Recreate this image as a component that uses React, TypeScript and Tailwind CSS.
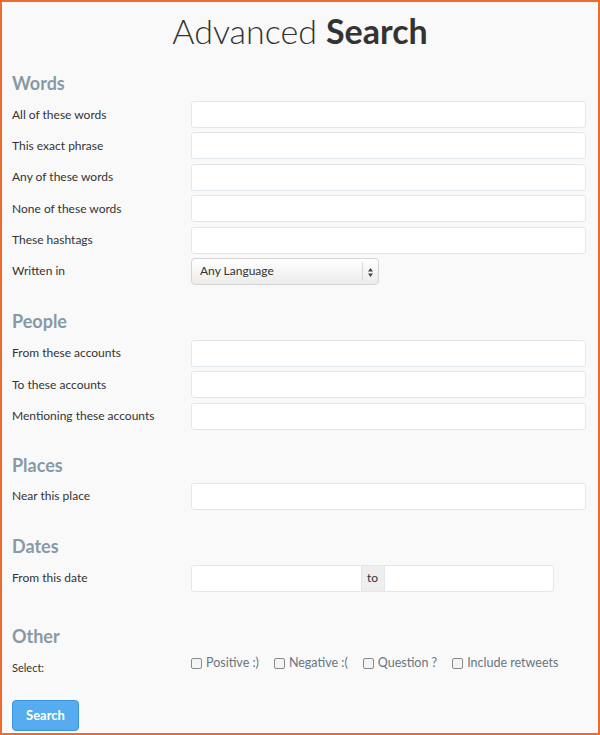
import React from "react";

const font = { fontFamily: "Lato, 'Open Sans', sans-serif" };

function Heading({ children }: { children: React.ReactNode }) {
  return (
    <h2 className="h-[24px] flex items-center text-[18px] font-bold text-[#8899a6] leading-none">
      {children}
    </h2>
  );
}

function Row({ label, children }: { label: string; children?: React.ReactNode }) {
  return (
    <div className="flex items-center h-[27px]">
      <label className="w-[179px] text-[12px] text-[#333]">{label}</label>
      {children ?? (
        <input className="w-[395px] h-[27px] bg-white border border-[#e1e8ed] rounded-[3px] outline-none" />
      )}
    </div>
  );
}

function Check({ label }: { label: string }) {
  return (
    <label className="flex items-center gap-[4px] text-[12.5px] text-[#66757f]">
      <span className="w-[11px] h-[11px] border border-[#8a8a8a] rounded-[2px] bg-[#f4f4f4]" />
      {label}
    </label>
  );
}

export default function App() {
  return (
    <div style={font} className="w-[600px] h-[735px] border-2 border-[#ee6b2d] bg-[#f9f9f9] px-[10px] overflow-hidden">
      <h1 className="h-[58px] flex items-center justify-center text-[34px] text-[#333] leading-none">
        <span className="font-light">Advanced</span>
        <span className="font-bold ml-[9px]">Search</span>
      </h1>

      <div className="mt-[11px]">
        <Heading>Words</Heading>
        <div className="mt-[6px] flex flex-col gap-[4.4px]">
          <Row label="All of these words" />
          <Row label="This exact phrase" />
          <Row label="Any of these words" />
          <Row label="None of these words" />
          <Row label="These hashtags" />
          <Row label="Written in">
            <div className="relative w-[188px] h-[27px] rounded-[4px] border border-[#d4d4d4] bg-gradient-to-b from-white to-[#ececec] flex items-center text-[12px] text-[#333] pl-[8px]">
              Any Language
              <span className="absolute right-[15px] top-[3px] bottom-[3px] w-px bg-[#d8d8d8]" />
              <svg className="absolute right-[4px] top-[8px]" width="7" height="11" viewBox="0 0 7 11">
                <path d="M3.5 1 L6 4.5 H1 Z M3.5 10 L6 6.5 H1 Z" fill="#444" />
              </svg>
            </div>
          </Row>
        </div>
      </div>

      <div className="mt-[24px]">
        <Heading>People</Heading>
        <div className="mt-[7px] flex flex-col gap-[4.5px]">
          <Row label="From these accounts" />
          <Row label="To these accounts" />
          <Row label="Mentioning these accounts" />
        </div>
      </div>

      <div className="mt-[23px]">
        <Heading>Places</Heading>
        <div className="mt-[6px]">
          <Row label="Near this place" />
        </div>
      </div>

      <div className="mt-[24px]">
        <Heading>Dates</Heading>
        <div className="mt-[7px]">
          <Row label="From this date">
            <div className="flex w-[363px] h-[27px] bg-white border border-[#e1e8ed] rounded-[3px] overflow-hidden">
              <input className="flex-1 min-w-0 outline-none" />
              <span className="w-[24px] bg-[#eeeeee] border-x border-[#e1e8ed] flex items-center justify-center text-[12px] text-[#333]">
                to
              </span>
              <input className="flex-1 min-w-0 outline-none" />
            </div>
          </Row>
        </div>
      </div>

      <div className="mt-[32px]">
        <Heading>Other</Heading>
        <div className="mt-[6px] flex items-start h-[26px]">
          <span className="w-[179px] text-[11px] text-[#333] mt-[6px]">Select:</span>
          <div className="flex gap-[15px]">
            <Check label="Positive :)" />
            <Check label="Negative :(" />
            <Check label="Question ?" />
            <Check label="Include retweets" />
          </div>
        </div>
      </div>

      <button className="mt-[20px] w-[67px] h-[31px] rounded-[4px] bg-[#55acee] border border-[#3b94d9] text-white text-[13px] font-bold">
        Search
      </button>
    </div>
  );
}
